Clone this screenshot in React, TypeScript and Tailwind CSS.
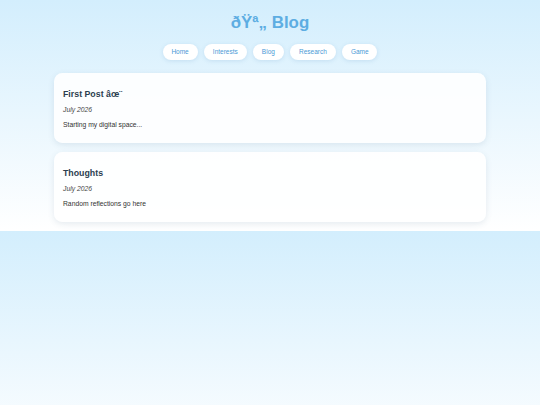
const links = ['Home', 'Interests', 'Blog', 'Research', 'Game'];

const posts = [
  { title: 'First Post âœ¨', date: 'July 2026', body: 'Starting my digital space...' },
  { title: 'Thoughts', date: 'July 2026', body: 'Random reflections go here' },
];

export default function App() {
  return (
    <div className="flex h-screen flex-col font-['Liberation_Sans',Arial,sans-serif]">
      <div className="bg-[linear-gradient(to_bottom,#d3eefd,#ffffff)] pb-[9px]">
        <header className="pt-[13px]">
          <h1 className="text-center text-[16.9px] font-bold leading-[19.4px] text-[#5dade2]">ðŸª„ Blog</h1>
          <nav className="mt-[11.6px] flex justify-center gap-[6.5px]">
            {links.map((l) => (
              <a
                key={l}
                href="#"
                className="rounded-full bg-white px-[8.8px] py-[4.25px] text-[6.5px] leading-[7.5px] text-[#4a9ad6] shadow-[0_1px_4px_rgba(80,140,190,0.18)]"
              >
                {l}
              </a>
            ))}
          </nav>
        </header>

        <main className="mx-auto mt-[13px] flex w-[432px] flex-col gap-[9px]">
          {posts.map((p) => (
            <article
              key={p.title}
              className="rounded-[8.5px] bg-white/90 px-[9px] pt-[16px] pb-[14.1px] shadow-[0_2px_6px_rgba(60,90,120,0.12)]"
            >
              <h2 className="text-[8.8px] font-bold leading-[10.1px] text-[#2c3e50]">{p.title}</h2>
              <p className="mt-[7px] text-[6.75px] italic leading-[7.8px] text-[#444]">{p.date}</p>
              <p className="mt-[7.2px] text-[6.75px] leading-[7.8px] text-[#333]">{p.body}</p>
            </article>
          ))}
        </main>
      </div>
      <div className="flex-1 bg-[linear-gradient(to_bottom,#d3eefd,#ffffff)] bg-[length:100%_231px] bg-no-repeat" />
    </div>
  );
}
